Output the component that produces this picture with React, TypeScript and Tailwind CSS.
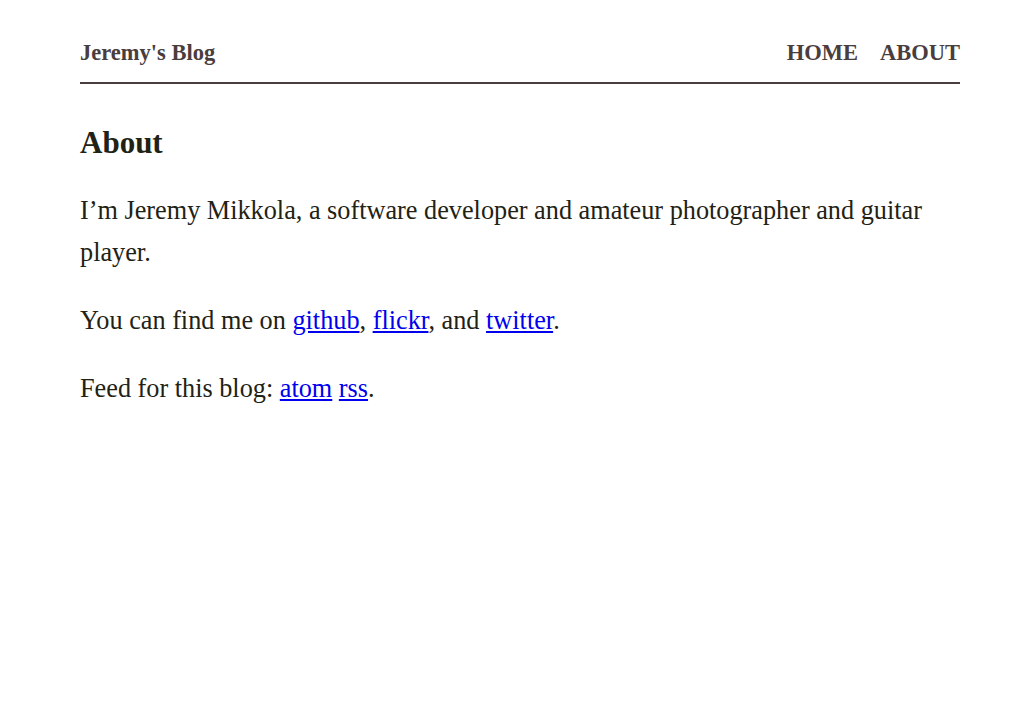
import React from "react";

const App = () => {
  return (
    <div className="min-h-screen bg-white font-['Liberation_Serif',serif] text-[#222214]">
      <div className="ml-20 w-[880px]">
        <header className="flex items-center justify-between border-b-2 border-[#4a3d3d] pt-[39px] pb-[15px] text-[#4a3d3d] font-bold">
          <a className="text-[22.5px] leading-[28px]">Jeremy's Blog</a>
          <nav className="flex items-center gap-[22px] text-[22.5px] leading-[28px]">
            <a>HOME</a>
            <a>ABOUT</a>
          </nav>
        </header>
        <main className="pt-[38px]">
          <h1 className="text-[31px] font-bold leading-[42px]">About</h1>
          <p className="mt-[26px] text-[26.25px] leading-[42px]">
            I’m Jeremy Mikkola, a software developer and amateur photographer and guitar player.
          </p>
          <p className="mt-[26px] text-[26.25px] leading-[42px]">
            You can find me on <a href="#" className="text-[#0000ee] underline">github</a>,{" "}
            <a href="#" className="text-[#0000ee] underline">flickr</a>, and{" "}
            <a href="#" className="text-[#0000ee] underline">twitter</a>.
          </p>
          <p className="mt-[26px] text-[26.25px] leading-[42px]">
            Feed for this blog: <a href="#" className="text-[#0000ee] underline">atom</a>{" "}
            <a href="#" className="text-[#0000ee] underline">rss</a>.
          </p>
        </main>
      </div>
    </div>
  );
};

export default App;
